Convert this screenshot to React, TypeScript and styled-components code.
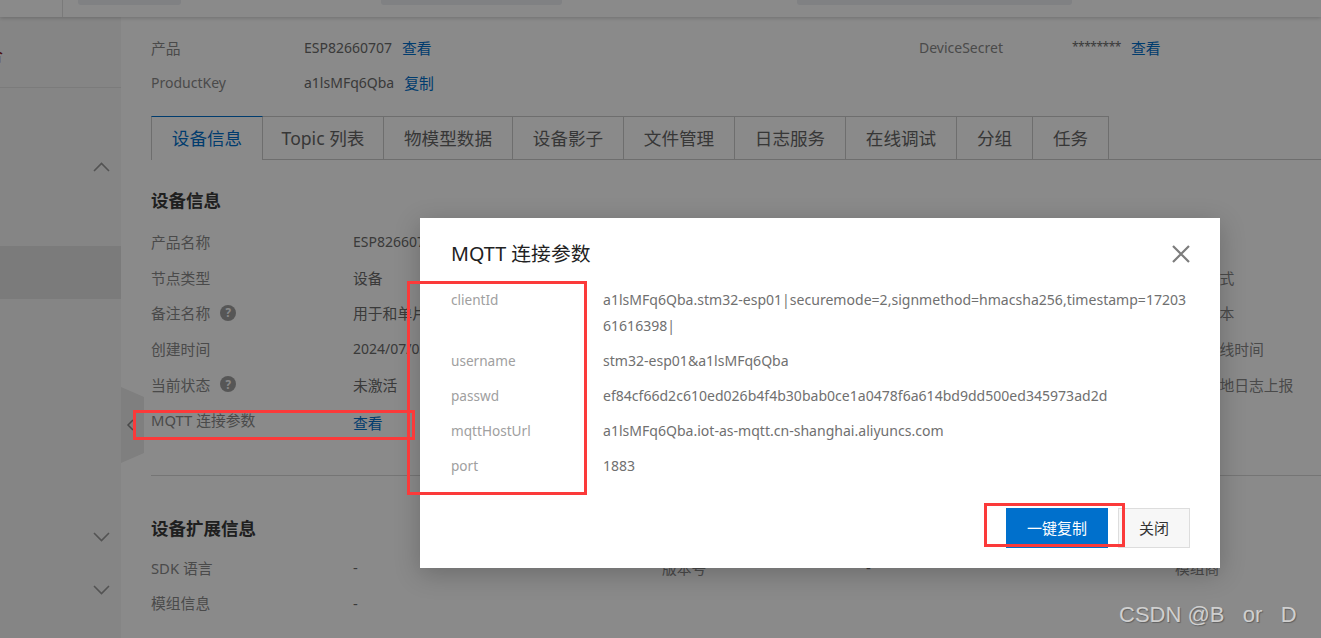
import React from "react";
import styled, { createGlobalStyle } from "styled-components";

const Global = createGlobalStyle`
  html, body { margin: 0; padding: 0; background: #fff; }
  body { font-family: "Noto Sans", "Noto Sans CJK SC", sans-serif; }
  * { box-sizing: border-box; }
`;

const Page = styled.div`
  position: relative;
  width: 1321px;
  height: 638px;
  overflow: hidden;
  background: #fff;
  color: #666;
  font-size: 14.8px;
`;

const TopBar = styled.header`
  display: flex;
  align-items: flex-start;
  height: 17px;
  background: #fff;
  box-shadow: 0 1px 4px rgba(0, 0, 0, 0.2);
  position: relative;
`;
const TopCell = styled.div<{ $w: number }>`
  width: ${(p) => p.$w}px;
  height: 17px;
  flex: none;
`;
const TopDivider = styled.div`
  width: 1px;
  height: 17px;
  background: #e2e2e2;
  flex: none;
  margin-right: 15px;
`;
const TopBlob = styled.div<{ $w: number; $gap: number }>`
  width: ${(p) => p.$w}px;
  height: 5px;
  margin-right: ${(p) => p.$gap}px;
  background: #eceef3;
  border-radius: 0 0 3px 3px;
  flex: none;
`;

const Body = styled.div`
  display: flex;
  height: 621px;
`;

const Sidebar = styled.aside`
  width: 121px;
  flex: none;
  background: #f6f6f6;
  display: flex;
  flex-direction: column;
`;
const SideHead = styled.div`
  height: 71px;
  border-bottom: 1px solid #e4e4e4;
  display: flex;
  align-items: center;
  overflow: hidden;
  padding-top: 3px;
`;
const Clipped = styled.span`
  font-size: 16px;
  margin-left: -13px;
  color: #8a1515;
`;
const SideToggle = styled.div<{ $h: number }>`
  height: ${(p) => p.$h}px;
  display: flex;
  align-items: center;
  justify-content: flex-end;
  padding-right: 11px;
  color: #999;
`;
const SideActive = styled.div`
  height: 53px;
  background: #e3e3e3;
`;
const Gap = styled.div<{ $h: number }>`
  height: ${(p) => p.$h}px;
`;

const Handle = styled.svg`
  position: absolute;
  left: 121px;
  top: 387px;
`;

const Main = styled.main`
  flex: 1;
  padding: 13px 0 0 30px;
  min-width: 0;
`;

const InfoGrid = styled.div`
  display: grid;
  grid-template-columns: 153px 615px 153px 1fr;
  grid-auto-rows: 35px;
  align-items: center;
`;

const Label = styled.div`
  color: #8a8a8a;
  white-space: nowrap;
`;
const LatinLabel = styled(Label)`
  font-size: 14px;
`;
const Value = styled.div`
  color: #6b6b6b;
  white-space: nowrap;
  display: flex;
  align-items: center;
`;
const LatinValue = styled(Value)`
  font-size: 14px;
`;
const Stars = styled.span`
  font-size: 12px;
  letter-spacing: -0.5px;
  margin-top: -3px;
`;
const Link = styled.a<{ $ml?: number; $down?: number }>`
  color: #0070cc;
  font-size: 14.8px;
  margin-left: ${(p) => p.$ml ?? 0}px;
  padding-top: ${(p) => p.$down ?? 0}px;
`;

const Tabs = styled.nav`
  display: flex;
  margin-top: 16px;
  height: 44px;
  border-bottom: 1px solid #ccc;
`;
const Tab = styled.div<{ $w: number; $active?: boolean }>`
  width: ${(p) => p.$w}px;
  height: ${(p) => (p.$active ? 44 : 43)}px;
  flex: none;
  display: flex;
  align-items: center;
  justify-content: center;
  padding-bottom: 2px;
  font-size: 17.6px;
  white-space: nowrap;
  color: ${(p) => (p.$active ? "#0070cc" : "#666")};
  border-right: 1px solid #ccc;
  border-top: 1px solid ${(p) => (p.$active ? "#0070cc" : "#ccc")};
  background: #fff;
  ${(p) => (p.$active ? "border-left: 1px solid #ccc;" : "")}
`;

const SectionTitle = styled.h3<{ $mt: number }>`
  margin: ${(p) => p.$mt}px 0 0;
  font-size: 17.5px;
  line-height: 24px;
  font-weight: 700;
  color: #3a3a3a;
`;

const DetailGrid = styled.div<{ $mt: number }>`
  margin-top: ${(p) => p.$mt}px;
  display: grid;
  grid-template-columns: 202px 309px 204px 309px 1fr;
  grid-auto-rows: 35.6px;
  align-items: center;
`;
const LabelWithHelp = styled(Label)`
  display: flex;
  align-items: center;
  gap: 10px;
`;
const Help = styled.span`
  width: 16px;
  height: 16px;
  border-radius: 50%;
  background: #a0a0a0;
  color: #fff;
  font-size: 11.5px;
  font-weight: 700;
  display: flex;
  align-items: center;
  justify-content: center;
`;
const Divider = styled.hr`
  border: 0;
  border-top: 1px solid #d8d8d8;
  margin: 37px 0 0;
`;

const Overlay = styled.div`
  position: absolute;
  inset: 0;
  background: rgba(0, 0, 0, 0.46);
`;

const Modal = styled.section`
  position: absolute;
  left: 420px;
  top: 218px;
  width: 800px;
  height: 350px;
  background: #fff;
  box-shadow: 0 6px 24px rgba(0, 0, 0, 0.22);
  padding: 22px 30px 20px 31px;
  display: flex;
  flex-direction: column;
`;
const ModalHead = styled.div`
  display: flex;
  justify-content: space-between;
  align-items: center;
  height: 28px;
`;
const ModalTitle = styled.h2`
  margin: 0;
  font-size: 19.8px;
  font-weight: 400;
  color: #222;
  line-height: 28px;
`;
const Close = styled.button`
  border: 0;
  background: none;
  padding: 0;
  display: flex;
  color: #7d7d7d;
`;
const ParamList = styled.dl`
  margin: 19px 0 0;
  display: grid;
  grid-template-columns: 152px 586px;
  row-gap: 9.5px;
  line-height: 25.5px;
`;
const ParamKey = styled.dt`
  color: #a0a0a0;
  font-size: 13.6px;
`;
const ParamValue = styled.dd`
  margin: 0;
  color: #707070;
  font-size: 14.05px;
  word-break: break-all;
`;
const ModalFoot = styled.div`
  margin-top: auto;
  display: flex;
  justify-content: flex-end;
  gap: 10px;
`;
const Btn = styled.button<{ $primary?: boolean }>`
  height: 40px;
  width: ${(p) => (p.$primary ? 102 : 72)}px;
  font: inherit;
  font-size: 15px;
  color: ${(p) => (p.$primary ? "#fff" : "#333")};
  background: ${(p) => (p.$primary ? "#0070cc" : "#f7f7f7")};
  border: 1px solid ${(p) => (p.$primary ? "#0070cc" : "#ddd")};
  padding: 0 0 2px;
`;

const Mark = styled.div<{ $x: number; $y: number; $w: number; $h: number }>`
  position: absolute;
  left: ${(p) => p.$x}px;
  top: ${(p) => p.$y}px;
  width: ${(p) => p.$w}px;
  height: ${(p) => p.$h}px;
  border: 3px solid #fb3a3a;
`;

const Watermark = styled.div`
  position: absolute;
  left: 1119px;
  top: 600px;
  font-family: "Liberation Sans", sans-serif;
  font-size: 22px;
  line-height: 30px;
  color: #cfcfcf;
  text-shadow: 1px 1px 1px rgba(0, 0, 0, 0.3);
  white-space: pre;
`;

const Chevron = ({ up }: { up?: boolean }) => (
  <svg width="17" height="10" viewBox="0 0 17 10" fill="none" stroke="currentColor" strokeWidth="1.6">
    <path d={up ? "M1 9 L8.5 1.5 L16 9" : "M1 1 L8.5 8.5 L16 1"} />
  </svg>
);

type Row = { label: string; value: string; latin?: boolean; help?: boolean; right: string };
const details: Row[] = [
  { label: "产品名称", value: "ESP82660707", latin: true, right: "" },
  { label: "节点类型", value: "设备", right: "认证方式" },
  { label: "备注名称", value: "用于和单片机连接", help: true, right: "固件版本" },
  { label: "创建时间", value: "2024/07/03", latin: true, right: "最后上线时间" },
  { label: "当前状态", value: "未激活", help: true, right: "设备本地日志上报" },
];

export default function App() {
  return (
    <Page>
      <Global />
      <TopBar>
        <TopCell $w={62} />
        <TopDivider />
        <TopBlob $w={103} $gap={200} />
        <TopBlob $w={181} $gap={235} />
        <TopBlob $w={275} $gap={0} />
      </TopBar>
      <Body>
        <Sidebar>
          <SideHead>
            <Clipped>合</Clipped>
          </SideHead>
          <SideToggle $h={158}>
            <Chevron up />
          </SideToggle>
          <SideActive />
          <Gap $h={212} />
          <SideToggle $h={52}>
            <Chevron />
          </SideToggle>
          <SideToggle $h={53}>
            <Chevron />
          </SideToggle>
        </Sidebar>
        <Handle width="24" height="77" viewBox="0 0 24 77">
          <polygon points="0,0 23,10 23,66 0,76" fill="#eaeaea" />
          <path d="M12 33 L7 38 L12 43" fill="none" stroke="#888" strokeWidth="1.5" />
        </Handle>
        <Main>
          <InfoGrid>
            <Label>产品</Label>
            <LatinValue>
              ESP82660707
              <Link $ml={10}>查看</Link>
            </LatinValue>
            <LatinLabel>DeviceSecret</LatinLabel>
            <LatinValue>
              <Stars>********</Stars>
              <Link $ml={10}>查看</Link>
            </LatinValue>
            <LatinLabel>ProductKey</LatinLabel>
            <LatinValue>
              a1lsMFq6Qba
              <Link $ml={10}>复制</Link>
            </LatinValue>
          </InfoGrid>
          <Tabs>
            <Tab $w={112} $active>设备信息</Tab>
            <Tab $w={121}>Topic 列表</Tab>
            <Tab $w={129}>物模型数据</Tab>
            <Tab $w={111}>设备影子</Tab>
            <Tab $w={111}>文件管理</Tab>
            <Tab $w={111}>日志服务</Tab>
            <Tab $w={111}>在线调试</Tab>
            <Tab $w={76}>分组</Tab>
            <Tab $w={76}>任务</Tab>
          </Tabs>
          <SectionTitle $mt={28}>设备信息</SectionTitle>
          <DetailGrid $mt={12}>
            {details.map((row) => (
              <React.Fragment key={row.label}>
                {row.help ? (
                  <LabelWithHelp>
                    {row.label}
                    <Help>?</Help>
                  </LabelWithHelp>
                ) : (
                  <Label>{row.label}</Label>
                )}
                {row.latin ? <LatinValue>{row.value}</LatinValue> : <Value>{row.value}</Value>}
                <Label />
                <Value />
                <Label>{row.right}</Label>
              </React.Fragment>
            ))}
            <Label>MQTT 连接参数</Label>
            <Value>
              <Link $down={5}>查看</Link>
            </Value>
          </DetailGrid>
          <Divider />
          <SectionTitle $mt={40}>设备扩展信息</SectionTitle>
          <DetailGrid $mt={10}>
            <Label>SDK 语言</Label>
            <Value>-</Value>
            <Label>版本号</Label>
            <Value>-</Value>
            <Label>模组商</Label>
            <Label>模组信息</Label>
            <Value>-</Value>
          </DetailGrid>
        </Main>
      </Body>
      <Overlay />
      <Modal>
        <ModalHead>
          <ModalTitle>MQTT 连接参数</ModalTitle>
          <Close aria-label="关闭">
            <svg width="18" height="18" viewBox="0 0 18 18" fill="none" stroke="currentColor" strokeWidth="2.2">
              <path d="M1 1 L17 17 M17 1 L1 17" />
            </svg>
          </Close>
        </ModalHead>
        <ParamList>
          <ParamKey>clientId</ParamKey>
          <ParamValue>a1lsMFq6Qba.stm32-esp01|securemode=2,signmethod=hmacsha256,timestamp=1720361616398|</ParamValue>
          <ParamKey>username</ParamKey>
          <ParamValue>stm32-esp01&amp;a1lsMFq6Qba</ParamValue>
          <ParamKey>passwd</ParamKey>
          <ParamValue>ef84cf66d2c610ed026b4f4b30bab0ce1a0478f6a614bd9dd500ed345973ad2d</ParamValue>
          <ParamKey>mqttHostUrl</ParamKey>
          <ParamValue>a1lsMFq6Qba.iot-as-mqtt.cn-shanghai.aliyuncs.com</ParamValue>
          <ParamKey>port</ParamKey>
          <ParamValue>1883</ParamValue>
        </ParamList>
        <ModalFoot>
          <Btn $primary>一键复制</Btn>
          <Btn>关闭</Btn>
        </ModalFoot>
      </Modal>
      <Mark $x={407} $y={281} $w={180} $h={214} />
      <Mark $x={133} $y={410} $w={282} $h={30} />
      <Mark $x={984} $y={503} $w={141} $h={44} />
      <Watermark>{"CSDN @B   or   D"}</Watermark>
    </Page>
  );
}
